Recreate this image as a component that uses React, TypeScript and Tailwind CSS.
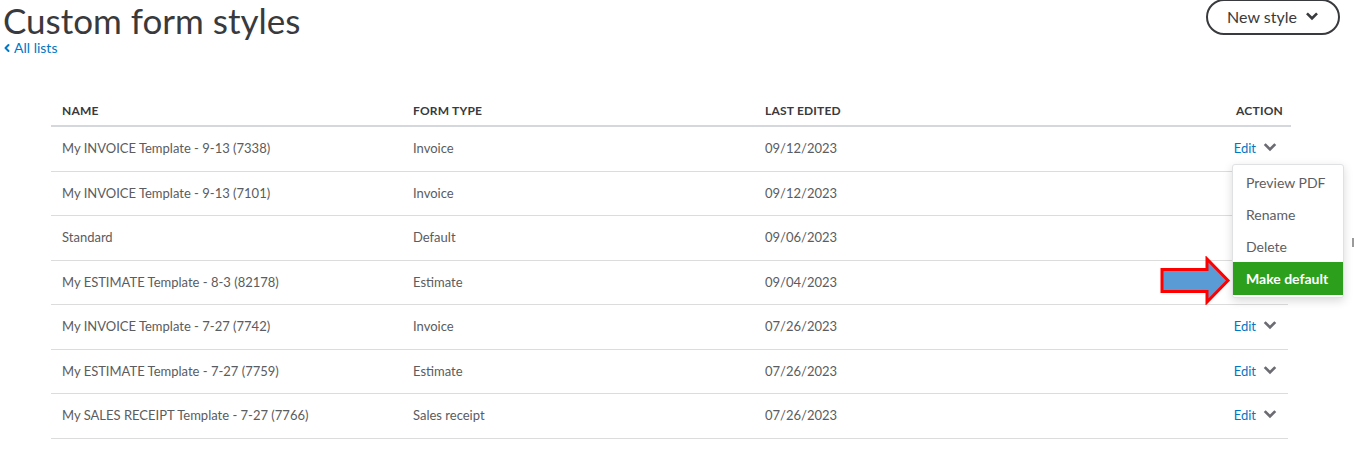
import { ChevronLeft } from 'lucide-react';

const rows = [
  { name: 'My INVOICE Template - 9-13 (7338)', type: 'Invoice', date: '09/12/2023', edit: true },
  { name: 'My INVOICE Template - 9-13 (7101)', type: 'Invoice', date: '09/12/2023', edit: false },
  { name: 'Standard', type: 'Default', date: '09/06/2023', edit: false },
  { name: 'My ESTIMATE Template - 8-3 (82178)', type: 'Estimate', date: '09/04/2023', edit: false },
  { name: 'My INVOICE Template - 7-27 (7742)', type: 'Invoice', date: '07/26/2023', edit: true },
  { name: 'My ESTIMATE Template - 7-27 (7759)', type: 'Estimate', date: '07/26/2023', edit: true },
  { name: 'My SALES RECEIPT Template - 7-27 (7766)', type: 'Sales receipt', date: '07/26/2023', edit: true },
];

function Chevron({ className }: { className?: string }) {
  // chunky down chevron used in the action column and the button
  return (
    <svg className={className} viewBox="0 0 16 12" fill="currentColor">
      <path d="M1.2 2.2 3.3 0.2 8 4.9 12.7 0.2 14.8 2.2 8 9 z" />
    </svg>
  );
}

export default function App() {
  return (
    <div
      className="relative w-[1354px] h-[465px] bg-white overflow-hidden text-[#393a3d]"
      style={{ fontFamily: 'Lato, "Open Sans", Arial, sans-serif' }}
    >
      {/* header */}
      <div className="flex justify-between items-start">
        <div className="pl-[3px]">
          <h1 className="text-[35px] leading-[40px] font-normal text-[#393a3d]">Custom form styles</h1>
          <a className="flex items-center gap-[1px] text-[14px] leading-[16px] text-[#0077c5] -ml-[2px] mt-0">
            <ChevronLeft className="w-[12px] h-[12px]" strokeWidth={4} />
            All lists
          </a>
        </div>
        <button className="mr-[14px] -mt-[1px] w-[134px] h-[36px] rounded-full border-2 border-[#393a3d] flex items-center justify-center gap-[8px] text-[16px] text-[#393a3d]">
          New style
          <Chevron className="w-[14px] h-[11px] mt-[1px]" />
        </button>
      </div>

      {/* table */}
      <div className="ml-[51px] w-[1240px] mt-[40px]">
        <div className="grid grid-cols-[351px_352px_1fr_130px] h-[31px] items-center border-b-2 border-[#d4d7dc] text-[12px] font-bold tracking-[0.2px] pl-[11px] pr-[8px]">
          <div>NAME</div>
          <div>FORM TYPE</div>
          <div>LAST EDITED</div>
          <div className="text-right">ACTION</div>
        </div>
        {rows.map((r, i) => (
          <div
            key={i}
            className="grid grid-cols-[351px_352px_1fr_130px] h-[44.5px] items-center border-b border-[#dcdcdc] text-[13px] text-[#5a5c60] pl-[11px] pr-[10px] mr-[3px]"
          >
            <div>{r.name}</div>
            <div>{r.type}</div>
            <div>{r.date}</div>
            <div className="flex justify-end items-center gap-[6px]">
              {r.edit && (
                <>
                  <span className="text-[#0077c5] text-[13px]">Edit</span>
                  <Chevron className="w-[16px] h-[11px] text-[#6b6c72]" />
                </>
              )}
            </div>
          </div>
        ))}
      </div>

      {/* dropdown menu */}
      <div className="absolute left-[1232px] top-[164px] w-[112px] bg-white border border-[#e0e1e3] rounded-[3px] shadow-[0_3px_10px_rgba(0,0,0,0.15)] pt-[1px] pb-[2px] text-[14px] text-[#5c5e63]">
        <div className="h-[32px] flex items-center pl-[13px]">Preview PDF</div>
        <div className="h-[32px] flex items-center pl-[13px]">Rename</div>
        <div className="h-[32px] flex items-center pl-[13px]">Delete</div>
        <div className="h-[33px] flex items-center pl-[13px] bg-[#2ca01c] text-white font-bold">Make default</div>
      </div>

      {/* annotation arrow */}
      <svg className="absolute left-[1159px] top-[256px] w-[72px] h-[49px]" viewBox="0 0 72 49">
        <path
          d="M3 13.5 H48 V3 L69 24.5 L48 46 V35.5 H3 Z"
          fill="#5b9bd5"
          stroke="#ff0000"
          strokeWidth="3"
          strokeLinejoin="miter"
        />
      </svg>

      <div className="absolute left-[1352px] top-[238px] w-[2px] h-[9px] bg-[#9a9a9a]" />
    </div>
  );
}
